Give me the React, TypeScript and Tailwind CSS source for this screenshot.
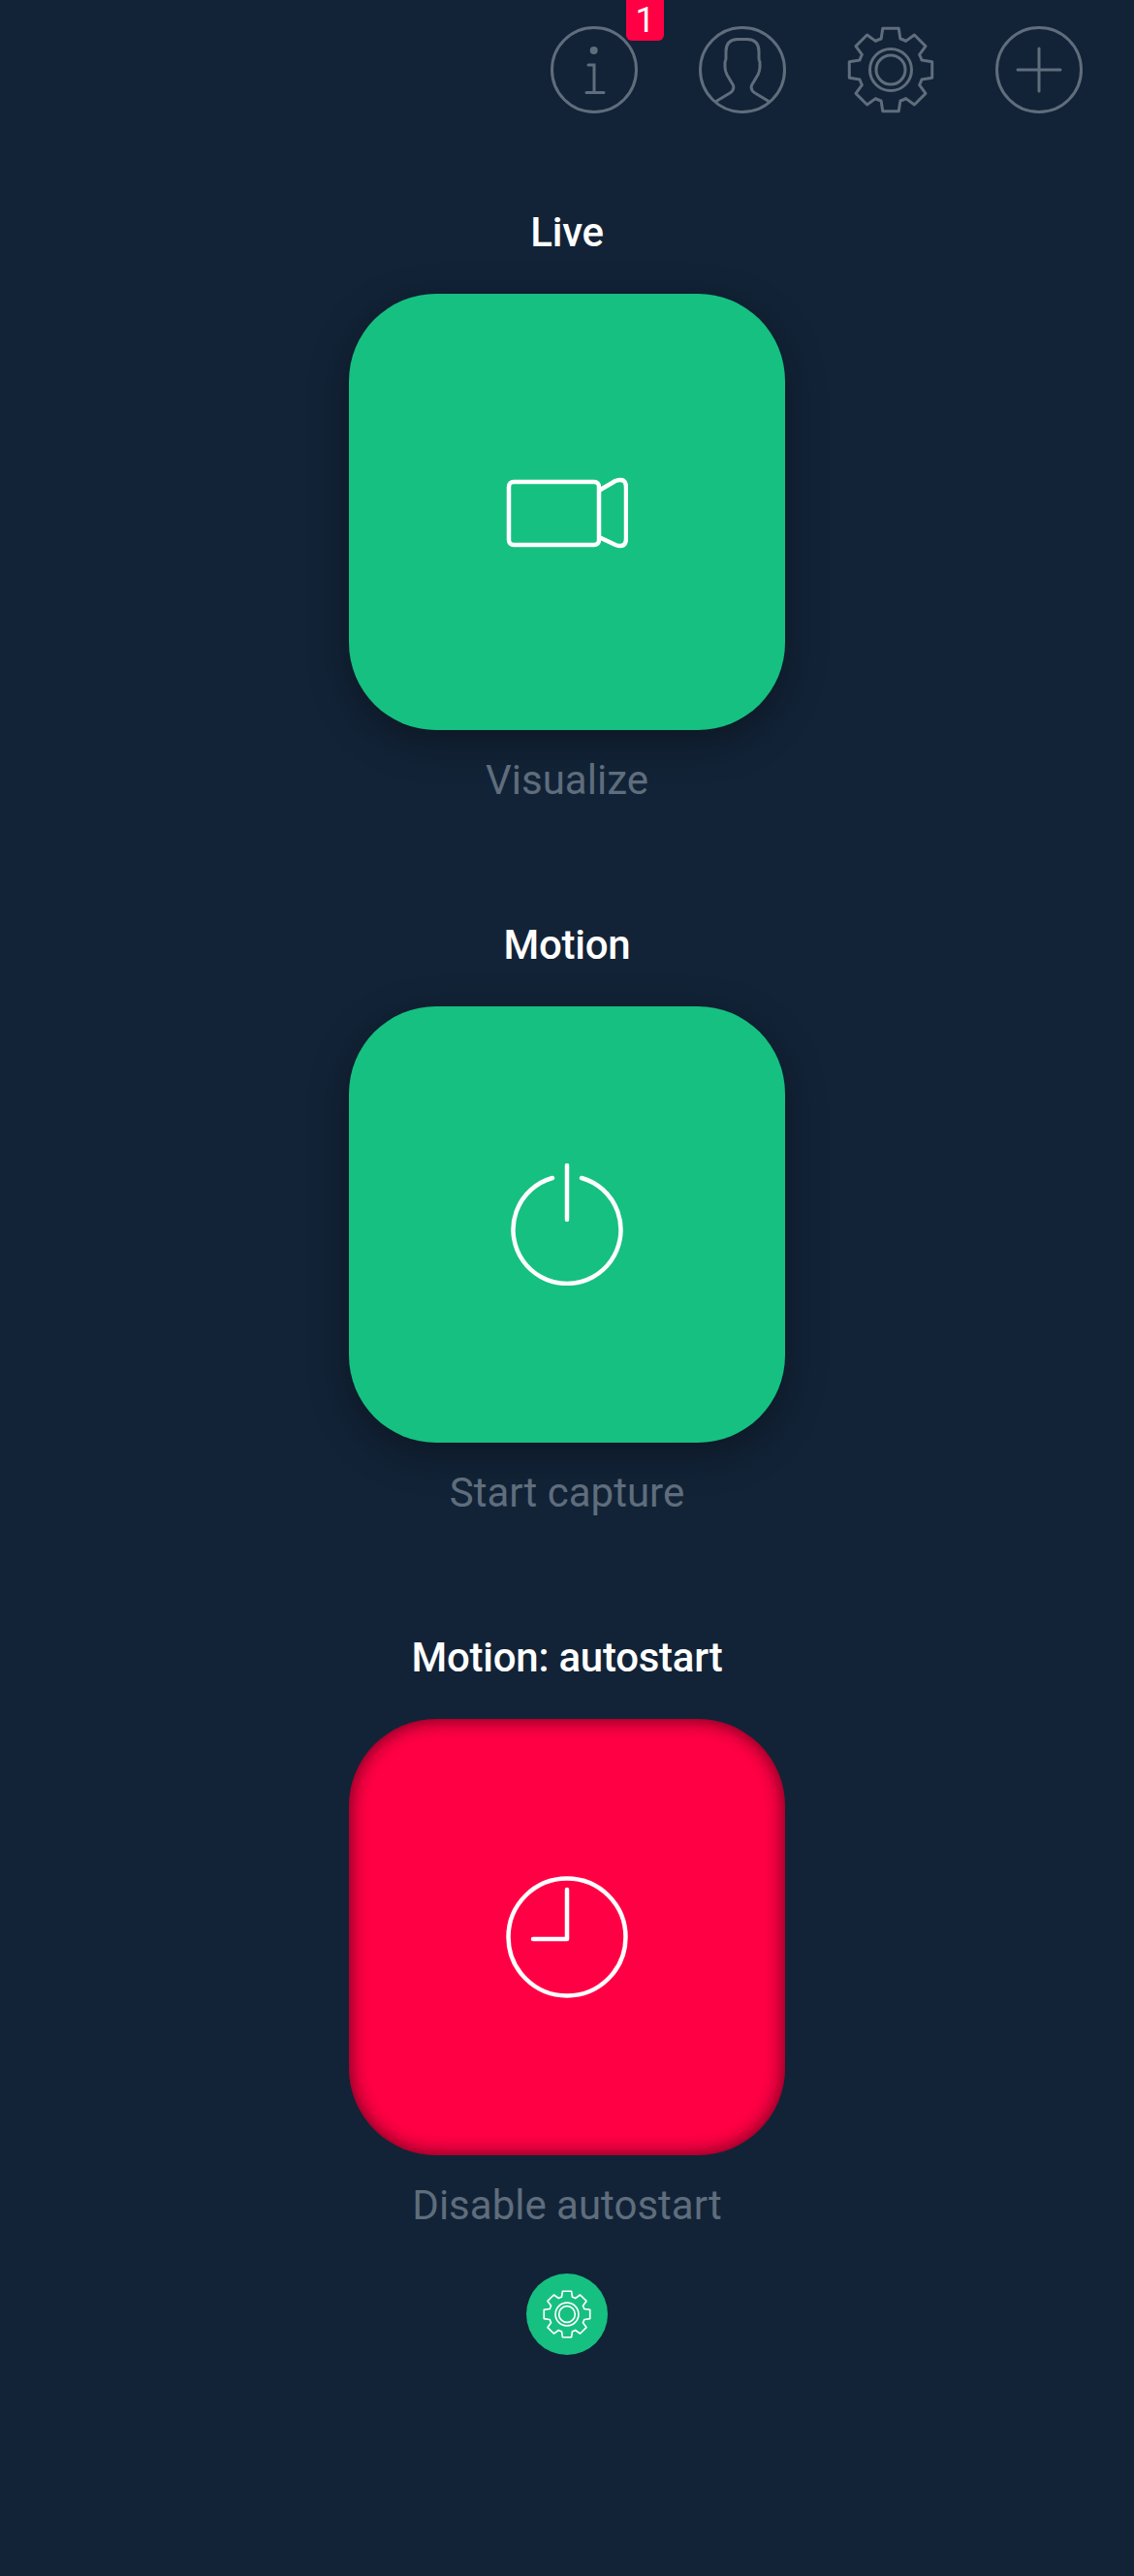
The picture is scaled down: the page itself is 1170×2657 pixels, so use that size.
import React from 'react';

// Gear outline: 8 teeth around the centre of a 90x90 box
const gearPath = () => {
  const c = 45;
  const pt = (r: number, a: number) => `${(c + r * Math.sin(a)).toFixed(2)} ${(c - r * Math.cos(a)).toFixed(2)}`;
  let d = '';
  for (let i = 0; i < 8; i++) {
    const a = (i * Math.PI) / 4;
    const base = 0.3;
    const tip = 0.19;
    d += `${i === 0 ? 'M' : 'L'}${pt(33.5, a - base)} L${pt(43.5, a - tip)} L${pt(43.5, a + tip)} L${pt(33.5, a + base)} `;
    d += `A33.5 33.5 0 0 1 ${pt(33.5, a + Math.PI / 4 - base)} `;
  }
  return d + 'Z';
};

const GearIcon = ({ className }: { className: string }) => (
  <svg viewBox="0 0 90 90" fill="none" stroke="currentColor" strokeWidth={3} strokeLinejoin="round" className={className}>
    <path d={gearPath()} />
    <circle cx="45" cy="45" r="21.5" />
    <circle cx="45" cy="45" r="15" />
  </svg>
);

const InfoIcon = () => (
  <svg viewBox="0 0 90 90" fill="none" stroke="currentColor" strokeWidth={3} strokeLinecap="round" className="w-[90px] h-[90px]">
    <circle cx="45" cy="45" r="43.5" />
    <circle cx="44.7" cy="25" r="4" fill="currentColor" stroke="none" />
    <path d="M39 40H45V68.5M37 68.5H55" />
  </svg>
);

const UserIcon = () => (
  <svg viewBox="0 0 90 90" fill="none" stroke="currentColor" strokeWidth={3} strokeLinejoin="round" className="w-[90px] h-[90px]">
    <circle cx="45" cy="45" r="43.5" />
    <path d="M17 78L32 69Q37 66 35.5 61L29 50Q27 46 27 42V37Q28 35 28 33V26Q28 14 40 13.5H50Q62 14 62 26V33Q62 35 63 37V42Q63 46 61 50L54.5 61Q53 66 58 69L73 78" />
  </svg>
);

const PlusIcon = () => (
  <svg viewBox="0 0 90 90" fill="none" stroke="currentColor" strokeWidth={3} strokeLinecap="round" className="w-[90px] h-[90px]">
    <circle cx="45" cy="45" r="43.5" />
    <path d="M45 23V67M23 45H67" />
  </svg>
);

const CameraIcon = () => (
  <svg viewBox="0 0 126 126" fill="none" stroke="currentColor" strokeWidth={4.5} strokeLinejoin="round" className="w-[126px] h-[126px]">
    <rect x="3" y="32" width="93" height="65" rx="5" />
    <path d="M96 41L113 31Q124 27 124 38V90Q124 101 113 97L96 89" />
  </svg>
);

const PowerIcon = () => (
  <svg viewBox="0 0 126 126" fill="none" stroke="currentColor" strokeWidth={4.5} strokeLinecap="round" className="w-[126px] h-[126px]">
    <path d="M63 2V58" />
    <path d="M48 15A55.5 55.5 0 1 0 78 15" />
  </svg>
);

const ClockIcon = () => (
  <svg viewBox="0 0 126 126" fill="none" stroke="currentColor" strokeWidth={4.5} strokeLinecap="round" strokeLinejoin="round" className="w-[126px] h-[126px]">
    <circle cx="63" cy="63" r="60.5" />
    <path d="M63 14V65H28" />
  </svg>
);

const sections = [
  { title: 'Live', label: 'Visualize', icon: <CameraIcon />, tile: 'bg-[#16c081] shadow-[0_12px_40px_rgba(0,0,0,0.35)]' },
  { title: 'Motion', label: 'Start capture', icon: <PowerIcon />, tile: 'bg-[#16c081] shadow-[0_12px_40px_rgba(0,0,0,0.35)]' },
  { title: 'Motion: autostart', label: 'Disable autostart', icon: <ClockIcon />, tile: 'bg-[#ff0044] shadow-[inset_0_0_20px_rgba(0,0,0,0.65)]' },
];

export default function App() {
  return (
    <div className="min-h-[2657px] bg-[#122337] font-['Roboto',sans-serif]">
      <div className="relative flex justify-end gap-[63px] pt-[27px] pr-[53px] text-[#5f6d7c]">
        <div className="relative">
          <InfoIcon />
          <span className="absolute left-[78px] top-[-27px] w-[39px] h-[42px] rounded-b-[6px] bg-[#ff0044] text-white text-[36px] leading-[42px] text-center">
            1
          </span>
        </div>
        <UserIcon />
        <GearIcon className="w-[90px] h-[90px]" />
        <PlusIcon />
      </div>

      <div className="flex flex-col items-center pt-[98px]">
        {sections.map((s) => (
          <div key={s.title} className="flex flex-col items-center h-[735px]">
            <h2 className="h-[50px] leading-[50px] text-[42px] font-medium text-white tracking-[-0.25px]">{s.title}</h2>
            <div className={`mt-[38px] w-[450px] h-[450px] rounded-[90px] flex items-center justify-center text-white ${s.tile}`}>
              {s.icon}
            </div>
            <p className="mt-[28px] h-[48px] leading-[48px] text-[42px] text-[#5f6d7c]">{s.label}</p>
          </div>
        ))}
      </div>

      <div className="flex justify-center mt-[-75px]">
        <button className="w-[84px] h-[84px] rounded-full bg-[#16c081] text-white flex items-center justify-center">
          <GearIcon className="w-[50px] h-[50px]" />
        </button>
      </div>
    </div>
  );
}
